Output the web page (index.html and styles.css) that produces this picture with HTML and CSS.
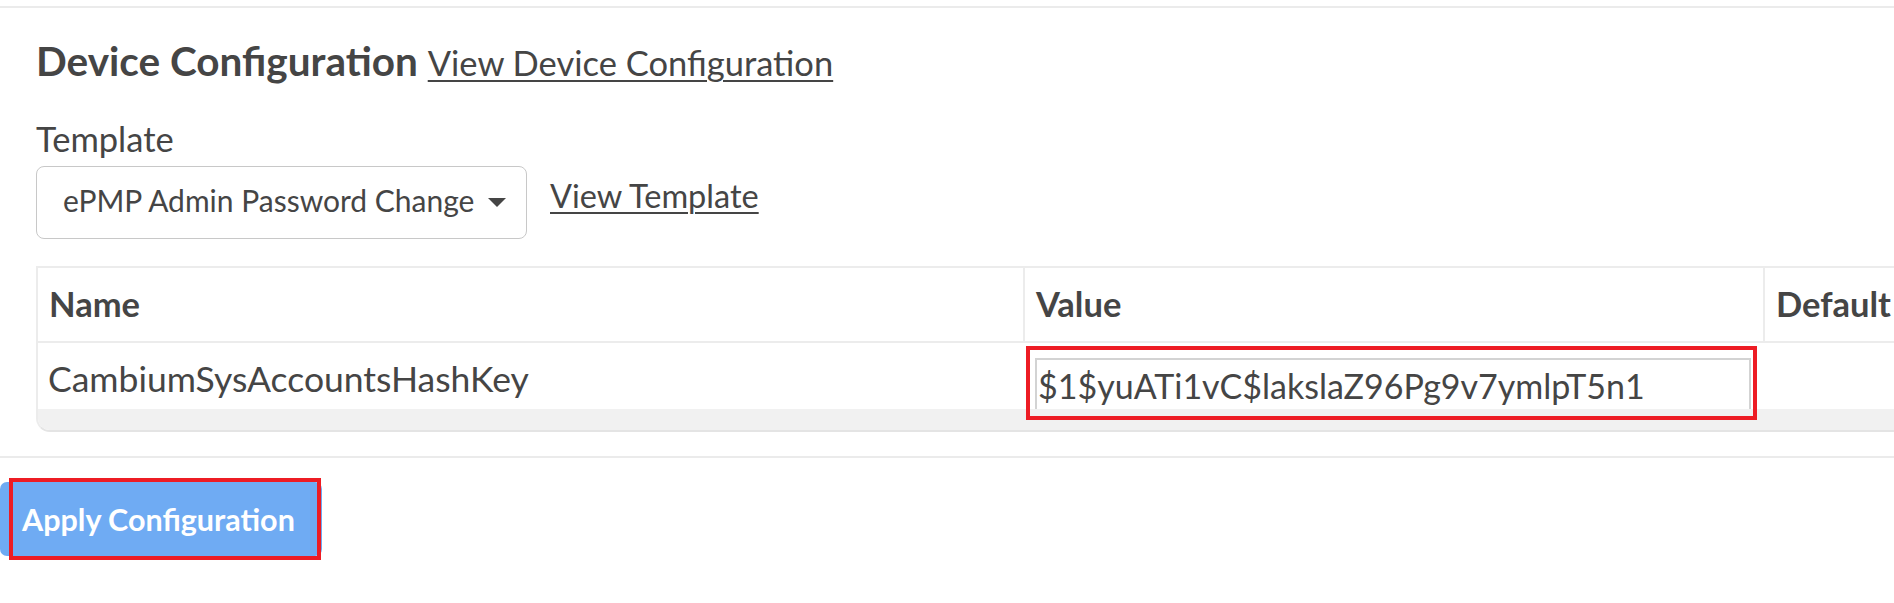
FILE: index.html
```html
<!DOCTYPE html>
<html lang="en">

<head>
    <meta charset="utf-8">
    <meta name="viewport" content="width=device-width, initial-scale=1.0">
    <title>Device Configuration</title>
    <link rel="stylesheet" href="styles.css">
</head>

<body>

    <section class="panel">
        <h2>Device Configuration <a href="#">View Device Configuration</a></h2>

        <p class="label">Template</p>
        <div class="template-row">
            <div class="select">
                <span>ePMP Admin Password Change</span>
                <span class="caret"></span>
            </div>
            <a class="view-link" href="#">View Template</a>
        </div>

        <div class="table-wrap">
            <table>
                <thead>
                    <tr>
                        <th class="col-name">Name</th>
                        <th class="col-value">Value</th>
                        <th class="col-default">Default</th>
                    </tr>
                </thead>
                <tbody>
                    <tr>
                        <td>CambiumSysAccountsHashKey</td>
                        <td>
                            <div class="field">
                                <input type="text" value="$1$yuATi1vC$lakslaZ96Pg9v7ymlpT5n1">
                                <span class="mark mark-input"></span>
                            </div>
                        </td>
                        <td></td>
                    </tr>
                </tbody>
            </table>
            <div class="scroll-track"></div>
        </div>
    </section>

    <div class="actions">
        <div class="apply-wrap">
            <button class="apply">Apply Configuration</button>
            <span class="mark mark-button"></span>
        </div>
    </div>

</body></html>
```

FILE: styles.css
```css
html {
    overflow: hidden;
}

body {
    margin: 0;
    font-family: Lato, "Liberation Sans", sans-serif;
    color: #454545;
}

a {
    color: #454545;
    text-decoration: underline;
    text-decoration-thickness: 2px;
    text-underline-offset: 4px;
}

.panel {
    margin-top: 6px;
    border-top: 2px solid #ebebeb;
    border-bottom: 2px solid #ebebeb;
    padding: 29px 0 24px 36px;
}

h2 {
    margin: 0;
    font-size: 40.5px;
    font-weight: 700;
    line-height: 1.2;
    white-space: nowrap;
}

h2 a {
    font-size: 34.5px;
    font-weight: 400;
}

.label {
    margin: 32px 0 7px;
    font-size: 34.5px;
    line-height: 1.2;
}

.template-row {
    display: flex;
    align-items: center;
}

.select {
    box-sizing: border-box;
    width: 491px;
    height: 73px;
    border: 1px solid #c8c8c8;
    border-radius: 8px;
    padding: 0 20px 4px 26px;
    display: flex;
    align-items: center;
    justify-content: space-between;
    font-size: 30px;
    line-height: 1.2;
}

.caret {
    width: 0;
    height: 0;
    margin-top: 4px;
    border-left: 9px solid transparent;
    border-right: 9px solid transparent;
    border-top: 9px solid #454545;
}

.view-link {
    margin: 0 0 14px 23px;
    font-size: 32.5px;
    line-height: 1.2;
}

.table-wrap {
    width: 2300px;
    margin-top: 27px;
    border-top: 2px solid #ececec;
    border-left: 2px solid #ececec;
    border-bottom: 2px solid #e4e4e4;
    border-bottom-left-radius: 14px;
}

table {
    border-collapse: separate;
    border-spacing: 0;
    table-layout: fixed;
    width: 2125px;
}

.col-name {
    width: 985px;
}

.col-value {
    width: 740px;
}

.col-default {
    width: 400px;
}

th {
    box-sizing: border-box;
    padding: 15px 13px 17px 11px;
    border-bottom: 2px solid #ececec;
    text-align: left;
    font-size: 34.5px;
    font-weight: 700;
    line-height: 1.2;
}

th + th {
    border-left: 2px solid #ececec;
}

td {
    padding: 15px 12px 0;
    font-size: 35.5px;
    line-height: 1.2;
    vertical-align: top;
}

td:first-child {
    padding-left: 10px;
}

.field {
    position: relative;
    width: 716px;
}

.field input {
    box-sizing: border-box;
    display: block;
    width: 716px;
    height: 51px;
    margin: 0;
    border: 2px solid #d3d3d3;
    border-bottom: none;
    padding: 2px 1px 0;
    font-family: Lato, "Liberation Sans", sans-serif;
    font-size: 34px;
    color: #454545;
    background: #fff;
}

.scroll-track {
    height: 21px;
    background: #f1f1f1;
    border-bottom-left-radius: 12px;
}

.mark {
    position: absolute;
    box-sizing: border-box;
    border: 4px solid #ed1c24;
}

.mark-input {
    left: -9px;
    top: -12px;
    width: 731px;
    height: 74px;
}

.actions {
    padding: 24px 0 40px;
}

.apply-wrap {
    position: relative;
    width: 322px;
}

.apply {
    display: block;
    box-sizing: border-box;
    width: 322px;
    height: 74px;
    margin: 0;
    border: none;
    border-radius: 7px;
    padding: 0 0 0 22px;
    text-align: left;
    background: #6fabf3;
    color: #fff;
    font-family: Lato, "Liberation Sans", sans-serif;
    font-size: 30.5px;
    font-weight: 700;
    line-height: 1.2;
}

.mark-button {
    left: 9px;
    top: -4px;
    width: 312px;
    height: 82px;
}
```
